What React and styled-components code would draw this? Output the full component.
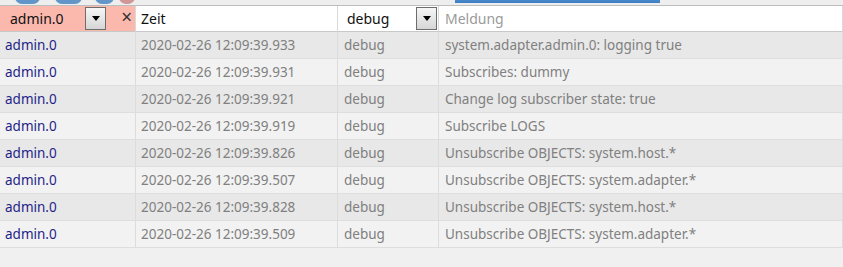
import React from 'react';
import styled, { createGlobalStyle } from 'styled-components';

const GlobalStyle = createGlobalStyle`
  body {
    margin: 0;
    background: #f0f0f0;
    font-family: "Noto Sans", "Open Sans", sans-serif;
  }
`;

const TopStrip = styled.div`
  height: 5px;
  overflow: hidden;
  display: flex;
  align-items: flex-end;
  border-bottom: 1px solid #bdbdbd;
  background: #eeeeee;
`;

const Blob = styled.div`
  flex: none;
  width: ${p => p.w}px;
  height: 14px;
  margin-left: ${p => p.ml}px;
  margin-bottom: 1px;
  border-radius: 7px;
  background: ${p => p.c || '#3f7fbf'};
  opacity: 0.8;
`;

const Bar = styled.div`
  flex: none;
  width: ${p => p.w}px;
  height: 10px;
  margin-left: ${p => p.ml}px;
  margin-bottom: 2px;
  background: linear-gradient(#64a0d8, #3d7fc4);
`;

const Grid = styled.div`
  display: grid;
  grid-template-columns: 136px 202px 101px 1fr;
`;

const HeadCell = styled.div`
  height: 26px;
  display: flex;
  align-items: center;
  padding-left: ${p => p.pl || 5}px;
  background: ${p => p.bg || '#ffffff'};
  border-right: 1px solid #d9d9d9;
  border-bottom: 1px solid #c8c8c8;
  font-size: 14px;
  color: ${p => p.muted ? '#9a9a9a' : '#111111'};
  box-sizing: border-box;
`;

const SelectText = styled.span`
  flex: 1;
`;

const DropButton = styled.div`
  width: 19px;
  height: 21px;
  border: 1px solid #6d6d6d;
  background: linear-gradient(#f6f6f6, #d6d6d6);
  display: flex;
  align-items: center;
  justify-content: center;
  margin-right: ${p => p.mr || 0}px;
  &::after {
    content: '';
    border-left: 4px solid transparent;
    border-right: 4px solid transparent;
    border-top: 5px solid #000;
  }
`;

const Clear = styled.span`
  font-size: 19px;
  color: #333;
  margin-right: 3px;
  line-height: 1;
  margin-top: -3px;
`;

const Cell = styled.div`
  height: 27px;
  display: flex;
  align-items: center;
  padding-left: ${p => p.pl || 5}px;
  background: ${p => p.odd ? '#e8e8e8' : '#f2f2f2'};
  border-right: 1px solid #dcdcdc;
  border-bottom: 1px solid #dedede;
  box-sizing: border-box;
  font-size: 13.5px;
  color: ${p => p.src ? '#1f1f88' : '#808080'};
  white-space: nowrap;
  overflow: hidden;
`;

const rows = [
  ['2020-02-26 12:09:39.933', 'system.adapter.admin.0: logging true'],
  ['2020-02-26 12:09:39.931', 'Subscribes: dummy'],
  ['2020-02-26 12:09:39.921', 'Change log subscriber state: true'],
  ['2020-02-26 12:09:39.919', 'Subscribe LOGS'],
  ['2020-02-26 12:09:39.826', 'Unsubscribe OBJECTS: system.host.*'],
  ['2020-02-26 12:09:39.507', 'Unsubscribe OBJECTS: system.adapter.*'],
  ['2020-02-26 12:09:39.828', 'Unsubscribe OBJECTS: system.host.*'],
  ['2020-02-26 12:09:39.509', 'Unsubscribe OBJECTS: system.adapter.*'],
];

export default function App() {
  return (
    <>
      <GlobalStyle />
      <TopStrip>
        <Blob ml={15} w={25} />
        <Blob ml={15} w={27} />
        <Blob ml={13} w={19} />
        <Blob ml={5} w={16} c="#c98080" />
        <Bar ml={320} w={205} />
      </TopStrip>
      <Grid>
        <HeadCell bg="#fbb9ae" pl={10}>
          <SelectText>admin.0</SelectText>
          <DropButton mr={15} />
          <Clear>×</Clear>
        </HeadCell>
        <HeadCell>Zeit</HeadCell>
        <HeadCell pl={9}>
          <SelectText>debug</SelectText>
          <DropButton mr={1} />
        </HeadCell>
        <HeadCell muted pl={6}>Meldung</HeadCell>
        {rows.map(([time, msg], i) => (
          <React.Fragment key={i}>
            <Cell odd={i % 2 === 0} src>admin.0</Cell>
            <Cell odd={i % 2 === 0}>{time}</Cell>
            <Cell odd={i % 2 === 0} pl={6}>debug</Cell>
            <Cell odd={i % 2 === 0} pl={6}>{msg}</Cell>
          </React.Fragment>
        ))}
      </Grid>
    </>
  );
}
